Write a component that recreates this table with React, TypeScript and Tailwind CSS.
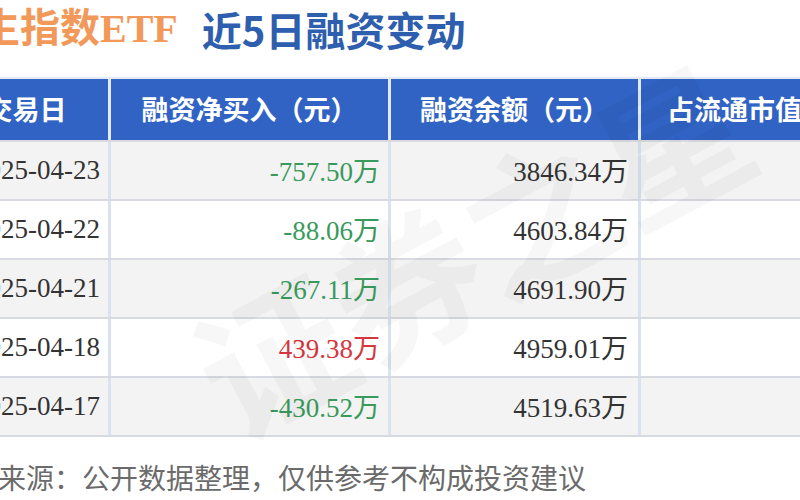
import React from 'react'

type Row = { date: string; net: string; balance: string; up: boolean }

const rows: Row[] = [
  { date: '2025-04-23', net: '-757.50', balance: '3846.34', up: false },
  { date: '2025-04-22', net: '-88.06', balance: '4603.84', up: false },
  { date: '2025-04-21', net: '-267.11', balance: '4691.90', up: false },
  { date: '2025-04-18', net: '439.38', balance: '4959.01', up: true },
  { date: '2025-04-17', net: '-430.52', balance: '4519.63', up: false },
]

const cjk = "font-['Noto_Sans_CJK_SC',sans-serif]"
const serif = "font-['Liberation_Serif','Noto_Sans_CJK_SC',serif]"
const cols = 'grid grid-cols-[164px_277px_247px_214px] gap-x-[3px]'

function Amount({ value, className }: { value: string; className: string }) {
  return (
    <span className={`${serif} ${className} text-[27px] leading-none`}>
      {value}
      <span className={cjk}>万</span>
    </span>
  )
}

export default function App() {
  return (
    <div className="relative w-[800px] h-[500px] overflow-hidden bg-white">
      {/* Title */}
      <div className="flex items-start pt-[9px] h-[77px] whitespace-nowrap">
        <span className={`${serif} ml-[-60px] text-[40px] leading-[40px] font-bold text-[#f2995a]`}>
          恒生指数ETF
        </span>
        <span className={`${cjk} ml-[24px] text-[40px] leading-[40px] font-bold text-[#2e5eae]`}>
          近5日融资变动
        </span>
      </div>

      {/* Table */}
      <div className="ml-[-56px] w-[920px] bg-[#d7dbe1] flex flex-col gap-[2px] pb-[2px]">
        <div className={`${cols} bg-[#e4eaf5] pt-[2px]`}>
          {['交易日', '融资净买入（元）', '融资余额（元）', '占流通市值比'].map((h) => (
            <div
              key={h}
              className={`${cjk} h-[61px] bg-[#3063c4] text-white text-[27px] font-bold flex items-center justify-center whitespace-nowrap`}
            >
              {h}
            </div>
          ))}
        </div>
        {rows.map((r, i) => {
          const bg = i % 2 === 0 ? 'bg-[#f3f3f3]' : 'bg-white'
          return (
            <div key={r.date} className={`${cols} bg-[#d9e2ee]`}>
              <div className={`${bg} h-[57px] flex items-center justify-end pr-[8px]`}>
                <span className={`${serif} text-[27px] leading-none text-[#333]`}>{r.date}</span>
              </div>
              <div className={`${bg} h-[57px] flex items-center justify-end pr-[8px]`}>
                <Amount value={r.net} className={r.up ? 'text-[#d6363f]' : 'text-[#3a9a5c]'} />
              </div>
              <div className={`${bg} h-[57px] flex items-center justify-end pr-[10px]`}>
                <Amount value={r.balance} className="text-[#333]" />
              </div>
              <div className={`${bg} h-[57px]`} />
            </div>
          )
        })}
      </div>

      {/* Source */}
      <div className={`${cjk} mt-[26px] ml-[-2px] text-[28px] leading-[28px] text-[#6b6b6b] whitespace-nowrap`}>
        来源：公开数据整理，仅供参考不构成投资建议
      </div>

      {/* Watermark */}
      <div
        className={`${cjk} pointer-events-none absolute left-[170px] top-[170px] text-[150px] leading-none font-bold text-black/[0.03] -rotate-[28deg] whitespace-nowrap`}
      >
        证券之星
      </div>
    </div>
  )
}
